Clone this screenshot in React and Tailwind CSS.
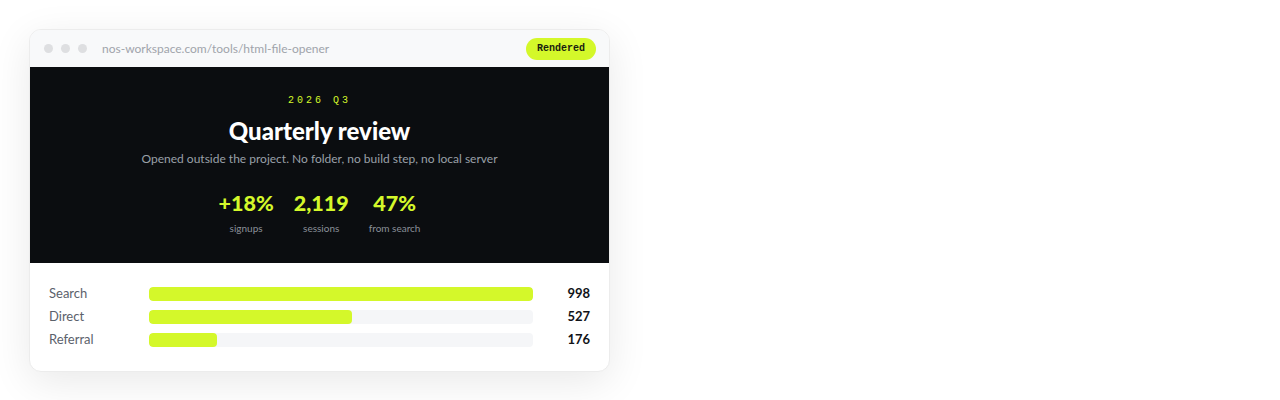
const stats = [
  { value: '+18%', label: 'signups' },
  { value: '2,119', label: 'sessions' },
  { value: '47%', label: 'from search' },
];

const sources = [
  { name: 'Search', count: 998 },
  { name: 'Direct', count: 527 },
  { name: 'Referral', count: 176 },
];

export default function App() {
  const max = Math.max(...sources.map((s) => s.count));

  return (
    <div className="w-[1280px] h-[400px] bg-white pt-[29px] pl-[29px]" style={{ fontFamily: 'Lato, "Noto Sans", sans-serif' }}>
      <div className="w-[581px] rounded-[12px] bg-white border border-[#ececec] overflow-hidden shadow-[0_10px_40px_rgba(0,0,0,0.09)]">
        {/* ─── Browser chrome ───────────────────────── */}
        <div className="h-[37px] bg-[#f8f9fa] flex items-center pl-[14px] pr-[13px]">
          <div className="flex gap-[8px]">
            <span className="w-[9px] h-[9px] rounded-full bg-[#dedfe1]" />
            <span className="w-[9px] h-[9px] rounded-full bg-[#dedfe1]" />
            <span className="w-[9px] h-[9px] rounded-full bg-[#dedfe1]" />
          </div>
          <span className="ml-[15px] text-[12px] text-[#a0a4ab]">nos-workspace.com/tools/html-file-opener</span>
          <span
            className="ml-auto h-[22px] px-[11px] rounded-full bg-[#d4f82a] text-[10px] font-bold text-[#1a1d10] flex items-center"
            style={{ fontFamily: '"Liberation Mono", monospace' }}
          >
            Rendered
          </span>
        </div>

        {/* ─── Hero ─────────────────────────────────── */}
        <div className="h-[196px] bg-[#0b0d10] flex flex-col items-center pt-[26px]">
          <p
            className="text-[10px] leading-[15px] tracking-[0.3em] text-[#d4f82a]"
            style={{ fontFamily: '"Liberation Mono", monospace' }}
          >
            2026 Q3
          </p>
          <h1 className="mt-[9px] text-[24px] leading-[28px] font-black text-white">Quarterly review</h1>
          <p className="mt-[5px] text-[12px] leading-[18px] text-[#9aa0a8]">
            Opened outside the project. No folder, no build step, no local server
          </p>
          <div className="mt-[22px] flex gap-[20px]">
            {stats.map((s) => (
              <div key={s.label} className="flex flex-col items-center">
                <span className="text-[21.5px] leading-[26px] font-black text-[#d4f82a]">{s.value}</span>
                <span className="mt-[5px] text-[10px] leading-[14px] text-[#8a9099]">{s.label}</span>
              </div>
            ))}
          </div>
        </div>

        {/* ─── Source bars ──────────────────────────── */}
        <div className="px-[19px] pt-[23px] pb-[23px] flex flex-col gap-[7px]">
          {sources.map((s) => (
            <div key={s.name} className="flex items-center h-[16px]">
              <span className="w-[100px] text-[13px] text-[#5b616b]">{s.name}</span>
              <div className="w-[384px] h-[14px] rounded-[4px] bg-[#f5f6f8] overflow-hidden">
                <div className="h-full rounded-[4px] bg-[#d4f82a]" style={{ width: `${(s.count / max) * 100}%` }} />
              </div>
              <span className="flex-1 text-right text-[13px] font-bold text-[#111318]">{s.count}</span>
            </div>
          ))}
        </div>
      </div>
    </div>
  );
}
